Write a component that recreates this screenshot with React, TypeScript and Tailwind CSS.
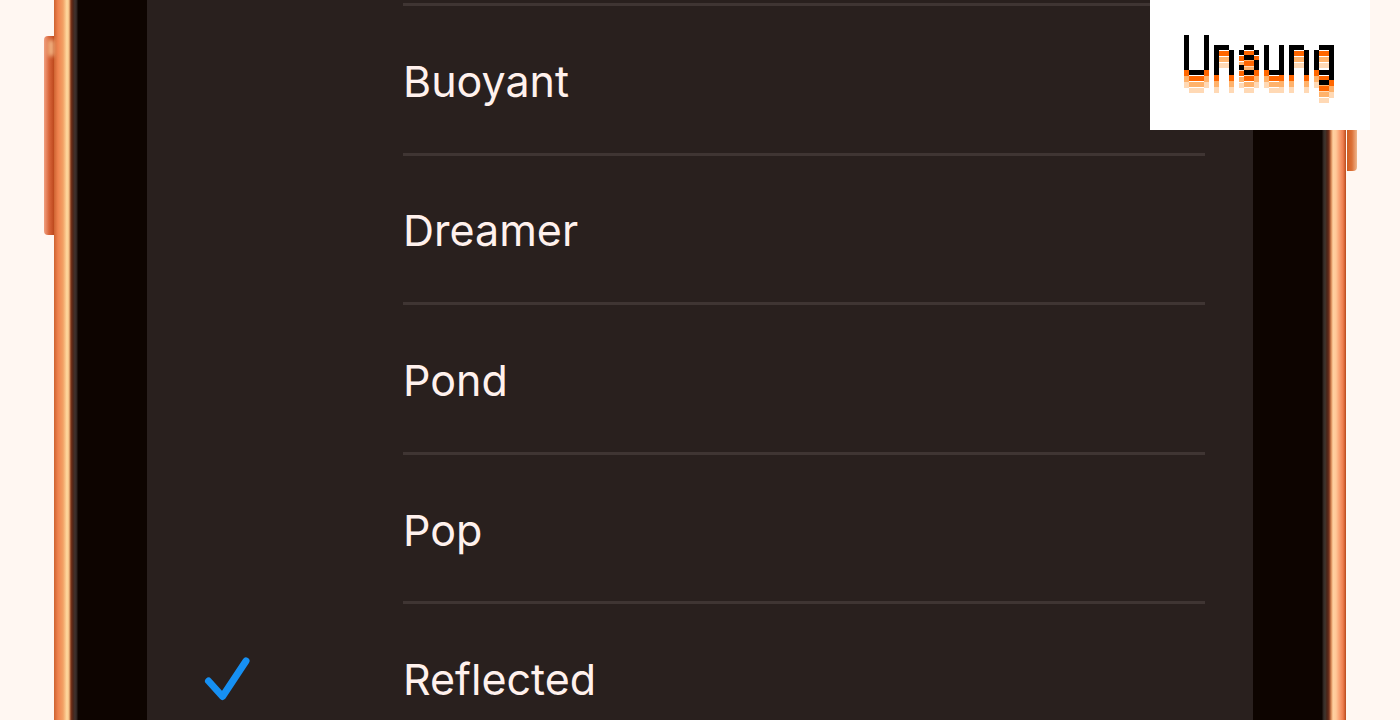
import { useState } from 'react';

const TONES = ['Buoyant', 'Dreamer', 'Pond', 'Pop', 'Reflected'];

// One character per logo pixel
const WORDMARK = [
  '#...#.........................',
  '#...#.........................',
  '#...#.###...##..#..#.###...###',
  '#...#.#..#.#..#.#..#.#..#.#..#',
  '#...#.#..#..##..#..#.#..#.#..#',
  '#...#.#..#....#.#..#.#..#.#..#',
  '#...#.#..#.#..#.#..#.#..#.#..#',
  '.###..#..#..##...###.#..#..###',
  '.............................#',
  '...........................##.',
];

// Drawn back to front, each layer 6 units above the last
const LAYERS = [
  { dy: 18, color: '#ffd9b5' },
  { dy: 12, color: '#ffb26b' },
  { dy: 6, color: '#ff6600' },
  { dy: 0, color: '#000000' },
];

const wordmarkPath = WORDMARK.map((row, y) =>
  row
    .split('')
    .map((cell, x) => (cell === '#' ? `M${x * 5} ${y * 5}h5v5h-5z` : ''))
    .join('')
).join('');

function Logo() {
  return (
    <a
      href="#"
      aria-label="Unsung"
      className="absolute top-0 right-[30px] flex h-[130px] w-[220px] items-start bg-white pt-[35px] pl-[34px]"
    >
      <svg width="150" height="68" viewBox="0 0 150 68" shapeRendering="crispEdges" aria-hidden="true">
        {LAYERS.map((layer) => (
          <path key={layer.dy} d={wordmarkPath} fill={layer.color} transform={`translate(0 ${layer.dy})`} />
        ))}
      </svg>
    </a>
  );
}

interface ToneRowProps {
  name: string;
  selected: boolean;
  onSelect: () => void;
}

function ToneRow({ name, selected, onSelect }: ToneRowProps) {
  return (
    <label className="flex flex-1 cursor-pointer">
      <span className="flex w-64 shrink-0 items-center pl-14">
        <input type="radio" name="tone" checked={selected} onChange={onSelect} className="sr-only" />
        {selected && (
          <svg width="48" height="48" viewBox="0 0 48 48" fill="none" aria-hidden="true">
            <path
              d="M5.5 26L19.5 41.5L43 6"
              stroke="#1690f3"
              strokeWidth="7"
              strokeLinecap="round"
              strokeLinejoin="round"
            />
          </svg>
        )}
      </span>
      <span className="mr-12 flex flex-1 items-center border-b-3 border-[#3f3533] pt-1 text-[43px] leading-none text-[#fff1ed]">
        {name}
      </span>
    </label>
  );
}

export default function App() {
  const [tone, setTone] = useState('Reflected');

  return (
    <div className="relative h-screen overflow-hidden bg-[#fff7f2] font-['Inter',sans-serif]">
      <div className="relative mx-[54px] flex h-full bg-[#0d0400]">
        {/* Side buttons */}
        <div className="absolute top-9 -left-2.5 h-[199px] w-2.5 rounded-l-sm bg-linear-to-r from-[#f0a080] via-[#d9653a] to-[#bd481c]">
          <div className="mt-1 ml-1 h-4 w-1.5 bg-[#f3b684] blur-[2px]" />
        </div>
        <div className="absolute top-0 -right-[11px] h-[171px] w-2.5 rounded-br-sm bg-linear-to-r from-[#cf5a20] via-[#dc7238] to-[#eeb68c]" />

        <div className="w-6 shrink-0 bg-[linear-gradient(to_right,#cd6331_0px,#ef824e_4px,#f2a064_9px,#ffdaa0_13px,#f4bd82_15px,#7b3218_17px,#4b2518_19px,#3f322e_21px,#2b211e_23px,#0d0400_24px)]" />
        <main className="mx-[69px] h-full flex-1 overflow-hidden bg-[#29201e]">
          <div className="mr-12 ml-64 h-1.5 border-b-3 border-[#3f3533]" />
          <div className="flex h-[748px] flex-col" role="radiogroup" aria-label="Tones">
            {TONES.map((name) => (
              <ToneRow key={name} name={name} selected={name === tone} onSelect={() => setTone(name)} />
            ))}
          </div>
        </main>
        <div className="w-6 shrink-0 bg-[linear-gradient(to_left,#b94a1c_0px,#ee7d4e_3px,#f79a6c_6px,#ffc898_10px,#ffd0a0_13px,#d4824f_15px,#71301c_17px,#4b2518_19px,#3f362f_21px,#2b211e_23px,#0d0400_24px)]" />
      </div>
      <Logo />
    </div>
  );
}
